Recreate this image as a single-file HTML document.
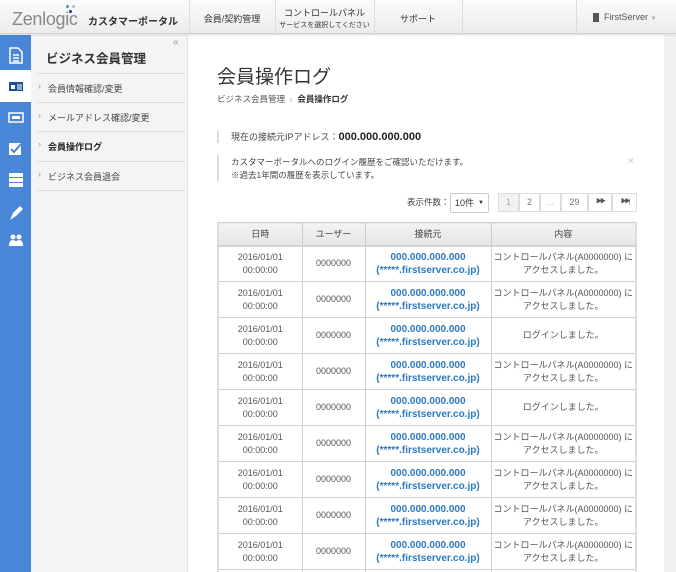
<!DOCTYPE html>
<html><head><meta charset="utf-8"><style>
*{margin:0;padding:0;box-sizing:border-box}
html,body{width:676px;height:572px;overflow:hidden}
body{position:relative;font-family:"Liberation Sans","Noto Sans CJK JP",sans-serif;color:#333;background:#fff}
.hdr{position:absolute;left:0;top:0;width:676px;height:34px;background:linear-gradient(#fbfbfb,#ececec);border-bottom:1px solid #cfcfcf;box-shadow:0 1px 2px rgba(0,0,0,.15);z-index:2}
.hdr .d{position:absolute;top:0;height:34px;width:1px;background:#dcdcdc}
.hdr .t{position:absolute;font-size:9px;color:#333;text-align:center}
.side{position:absolute;left:0;top:35px;width:31px;height:537px;background:#4a86d8}
.side .sel{position:absolute;left:0;top:35px;width:31px;height:32px;background:#fff}
.menu{position:absolute;left:31px;top:35px;width:157px;height:537px;background:#f4f4f4;border-right:1px solid #e2e2e2}
.menu .ln{position:absolute;left:6px;width:148px;height:1px;background:#dedede}
.menu .it{position:absolute;left:17px;font-size:9px;color:#444}
.menu .ar{position:absolute;left:7px;font-size:9px;color:#999}
.scroll{position:absolute;left:664px;top:35px;width:12px;height:537px;background:#f1f1f1}
table{position:absolute;left:217px;top:222px;width:420px;border-collapse:collapse;border-left:2px solid #ddd;border-right:2px solid #ddd;border-top:1px solid #ddd;font-size:9px}
th{height:23px;background:linear-gradient(#f3f3f3,#e6e6e6);font-weight:normal;color:#444;border:1px solid #ccc;border-bottom:2px solid #d4d4d4}
td{height:36px;border:1px solid #d0d0d0;text-align:center;line-height:13px;color:#555}
td.ip{color:#2a7ac0;font-weight:bold;font-size:10px}
.pg{position:absolute;top:193px;height:19px;border:1px solid #ddd;font-size:9px;color:#777;text-align:center;line-height:17px;background:#fff}
</style></head><body>
<div class="hdr">
<div style="position:absolute;left:12px;top:9px;font-size:18px;color:#888;letter-spacing:-.3px">Zenlogic</div>
<div style="position:absolute;left:66px;top:5px;width:3px;height:3px;border-radius:50%;background:#4a86d8"></div>
<div style="position:absolute;left:72px;top:5px;width:3px;height:3px;border-radius:50%;background:#9cc0ec"></div>
<div style="position:absolute;left:69px;top:10px;width:3px;height:3px;border-radius:50%;background:#1a3f8a"></div>
<div style="position:absolute;left:88px;top:13px;font-size:10px;font-weight:bold;color:#333">カスタマーポータル</div>
<div class="d" style="left:189px"></div><div class="d" style="left:275px"></div><div class="d" style="left:374px"></div><div class="d" style="left:462px"></div><div class="d" style="left:576px"></div>
<div class="t" style="left:189px;width:86px;top:12px">会員/契約管理</div>
<div class="t" style="left:275px;width:99px;top:6px">コントロールパネル<br><span style="font-size:7px">サービスを選択してください</span></div>
<div class="t" style="left:374px;width:88px;top:12px">サポート</div>
<div style="position:absolute;left:593px;top:13px;width:6px;height:9px;background:#555"></div>
<div class="t" style="left:604px;top:12px;color:#555">FirstServer <span style="color:#aaa;font-size:6px">▼</span></div>
</div>
<div class="side"><div class="sel"></div>
<svg width="31" height="537" style="position:absolute;left:0;top:0">
<g fill="none" stroke="#fff" stroke-width="1.5"><path d="M10 13h8l4 4v11h-12z"/><path d="M13 20h6M13 23h6M13 26h6"/></g>
<rect x="9" y="47" width="14" height="9" fill="#1f4f9a"/><rect x="11" y="50" width="4" height="4" fill="#fff"/><path d="M17 50h5M17 52h5M17 54h5" stroke="#fff"/>
<rect x="9" y="78" width="14" height="9" fill="none" stroke="#fff" stroke-width="1.5"/><rect x="12" y="81" width="8" height="3" fill="#fff"/>
<rect x="9" y="108" width="12" height="12" fill="#fff"/><path d="M11 114l3 3 7-8" stroke="#4a86d8" stroke-width="2" fill="none"/>
<g fill="#fff"><rect x="9" y="138" width="14" height="4"/><rect x="9" y="143" width="14" height="4"/><rect x="9" y="148" width="14" height="4"/></g>
<path d="M10 185l3-7 7-7 3 3-7 7z" fill="#fff"/>
<g fill="#fff"><circle cx="13" cy="202" r="2.5"/><circle cx="19" cy="202" r="2.5"/><path d="M9 211q0-6 4-6t4 6zM15 211q0-6 4-6t4 6z"/></g>
</svg></div>
<div class="menu">
<div style="position:absolute;left:142px;top:2px;font-size:10px;color:#999">«</div>
<div style="position:absolute;left:15px;top:13px;font-size:12.5px;font-weight:bold;color:#333">ビジネス会員管理</div>
<div class="ln" style="top:38px"></div><div class="ln" style="top:67px"></div><div class="ln" style="top:96px"></div><div class="ln" style="top:126px"></div><div class="ln" style="top:155px"></div>
<div class="ar" style="top:46px">›</div><div class="it" style="top:47px">会員情報確認/変更</div>
<div class="ar" style="top:75px">›</div><div class="it" style="top:76px">メールアドレス確認/変更</div>
<div class="ar" style="top:104px">›</div><div class="it" style="top:105px;font-weight:bold;color:#222">会員操作ログ</div>
<div class="ar" style="top:134px">›</div><div class="it" style="top:135px">ビジネス会員退会</div>
</div>
<div class="scroll"></div>
<div style="position:absolute;left:217px;top:62px;font-size:19px;color:#333">会員操作ログ</div>
<div style="position:absolute;left:217px;top:93px;font-size:8.5px;color:#555">ビジネス会員管理 <span style="color:#aaa">&nbsp;›&nbsp;</span> <b style="color:#333">会員操作ログ</b></div>
<div style="position:absolute;left:217px;top:130px;width:2px;height:13px;background:#ddd"></div>
<div style="position:absolute;left:231px;top:130px;font-size:9px;color:#444">現在の接続元IPアドレス：<b style="font-size:11px;color:#222">000.000.000.000</b></div>
<div style="position:absolute;left:217px;top:155px;width:2px;height:27px;background:#ddd"></div>
<div style="position:absolute;left:231px;top:156px;font-size:8.5px;color:#444;line-height:13px">カスタマーポータルへのログイン履歴をご確認いただけます。<br>※過去1年間の履歴を表示しています。</div>
<div style="position:absolute;left:628px;top:156px;font-size:10px;color:#bbb">×</div>
<div style="position:absolute;left:407px;top:196px;font-size:8.5px;color:#444">表示件数：</div>
<div style="position:absolute;left:450px;top:193px;width:39px;height:20px;border:1px solid #ccc;border-radius:2px;font-size:9px;line-height:18px;padding-left:4px;background:#fff">10件 <span style="position:absolute;right:4px;font-size:6px">▼</span></div>
<div class="pg" style="left:498px;width:21px;background:#f2f2f2;color:#aaa">1</div>
<div class="pg" style="left:519px;width:21px">2</div>
<div class="pg" style="left:540px;width:21px;color:#bbb">...</div>
<div class="pg" style="left:561px;width:27px">29</div>
<div class="pg" style="left:588px;width:24px;color:#555;font-size:6px;letter-spacing:-2px">▶▶</div>
<div class="pg" style="left:612px;width:25px;color:#555;font-size:6px;letter-spacing:-2px">▶▶|</div>
<table>
<tr><th style="width:84px">日時</th><th style="width:63px">ユーザー</th><th style="width:126px">接続元</th><th>内容</th></tr>
<tr><td>2016/01/01<br>00:00:00</td><td>0000000</td><td class="ip">000.000.000.000<br>(*****.firstserver.co.jp)</td><td>コントロールパネル(A0000000) に<br>アクセスしました。</td></tr>
<tr><td>2016/01/01<br>00:00:00</td><td>0000000</td><td class="ip">000.000.000.000<br>(*****.firstserver.co.jp)</td><td>コントロールパネル(A0000000) に<br>アクセスしました。</td></tr>
<tr><td>2016/01/01<br>00:00:00</td><td>0000000</td><td class="ip">000.000.000.000<br>(*****.firstserver.co.jp)</td><td>ログインしました。</td></tr>
<tr><td>2016/01/01<br>00:00:00</td><td>0000000</td><td class="ip">000.000.000.000<br>(*****.firstserver.co.jp)</td><td>コントロールパネル(A0000000) に<br>アクセスしました。</td></tr>
<tr><td>2016/01/01<br>00:00:00</td><td>0000000</td><td class="ip">000.000.000.000<br>(*****.firstserver.co.jp)</td><td>ログインしました。</td></tr>
<tr><td>2016/01/01<br>00:00:00</td><td>0000000</td><td class="ip">000.000.000.000<br>(*****.firstserver.co.jp)</td><td>コントロールパネル(A0000000) に<br>アクセスしました。</td></tr>
<tr><td>2016/01/01<br>00:00:00</td><td>0000000</td><td class="ip">000.000.000.000<br>(*****.firstserver.co.jp)</td><td>コントロールパネル(A0000000) に<br>アクセスしました。</td></tr>
<tr><td>2016/01/01<br>00:00:00</td><td>0000000</td><td class="ip">000.000.000.000<br>(*****.firstserver.co.jp)</td><td>コントロールパネル(A0000000) に<br>アクセスしました。</td></tr>
<tr><td>2016/01/01<br>00:00:00</td><td>0000000</td><td class="ip">000.000.000.000<br>(*****.firstserver.co.jp)</td><td>コントロールパネル(A0000000) に<br>アクセスしました。</td></tr>
<tr><td>2016/01/01<br>00:00:00</td><td>0000000</td><td class="ip">000.000.000.000<br>(*****.firstserver.co.jp)</td><td>コントロールパネル(A0000000) に<br>アクセスしました。</td></tr>
</table>
</body></html>
